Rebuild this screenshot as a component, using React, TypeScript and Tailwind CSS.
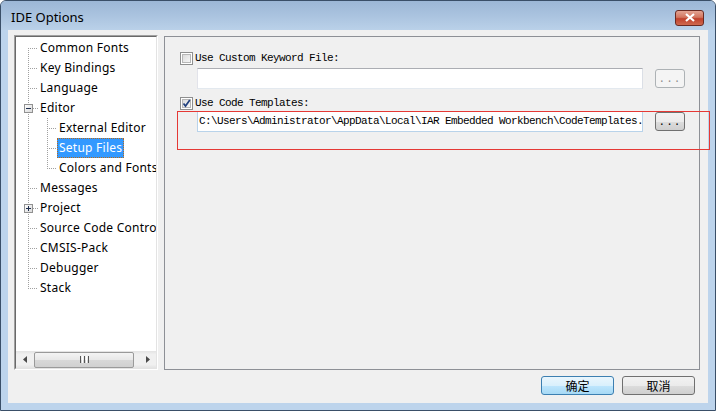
import React from 'react';

type Row = {
    label: string
    level: 0 | 1
    first?: boolean
    last?: boolean
    lastChild?: boolean
    expander?: 'plus' | 'minus'
    selected?: boolean
}

const rows: Row[] = [
    { label: 'Common Fonts', level: 0, first: true },
    { label: 'Key Bindings', level: 0 },
    { label: 'Language', level: 0 },
    { label: 'Editor', level: 0, expander: 'minus' },
    { label: 'External Editor', level: 1 },
    { label: 'Setup Files', level: 1, selected: true },
    { label: 'Colors and Fonts', level: 1, lastChild: true },
    { label: 'Messages', level: 0 },
    { label: 'Project', level: 0, expander: 'plus' },
    { label: 'Source Code Control', level: 0 },
    { label: 'CMSIS-Pack', level: 0 },
    { label: 'Debugger', level: 0 },
    { label: 'Stack', level: 0, last: true },
]

const dot = { stroke: '#a0a0a0', strokeWidth: 1, strokeDasharray: '1 1' }

function Connector({ row }: { row: Row }) {
    const w = row.level === 0 ? 22 : 41
    return (
        <svg width={w} height={20} className="shrink-0" shapeRendering="crispEdges">
            {/* root trunk */}
            <line x1={12.5} y1={row.first ? 10 : 0} x2={12.5} y2={row.last ? 11 : 20} {...dot} />
            {row.level === 0 && <line x1={row.expander ? 17 : 14} y1={10.5} x2={22} y2={10.5} {...dot} />}
            {row.level === 1 && (
                <>
                    <line x1={31.5} y1={0} x2={31.5} y2={row.lastChild ? 11 : 20} {...dot} />
                    <line x1={33} y1={10.5} x2={41} y2={10.5} {...dot} />
                </>
            )}
            {row.expander && (
                <g>
                    <defs>
                        <linearGradient id={`exp-${row.label}`} x1="0" y1="0" x2="1" y2="1">
                            <stop offset="0" stopColor="#ffffff" />
                            <stop offset="1" stopColor="#d8d8d8" />
                        </linearGradient>
                    </defs>
                    <rect x={8.5} y={6.5} width={8} height={8} fill={`url(#exp-${row.label})`} stroke="#919191" />
                    <line x1={10} y1={10.5} x2={15} y2={10.5} stroke="#1f2f4f" />
                    {row.expander === 'plus' && <line x1={12.5} y1={8} x2={12.5} y2={13} stroke="#1f2f4f" />}
                </g>
            )}
        </svg>
    )
}

function Checkbox({ checked }: { checked?: boolean }) {
    return (
        <div className="w-[13px] h-[13px] shrink-0 border border-[#8e8f8f] bg-white p-[1px]">
            <div className="w-full h-full relative border border-[#b7b7b7] bg-[linear-gradient(135deg,#dcdcdc_0%,#f6f6f6_100%)]">
                {checked && (
                    <svg width={11} height={11} viewBox="0 0 11 11" className="absolute -left-[2px] -top-[2px]">
                        <path d="M2.5 5.5 L4.5 8 L8.8 2" fill="none" stroke="#21407e" strokeWidth={1.7} />
                    </svg>
                )}
            </div>
        </div>
    )
}

function DotButton({ disabled }: { disabled?: boolean }) {
    return (
        <div
            className={
                disabled
                    ? 'w-[30px] h-[19px] ml-[12px] shrink-0 rounded-[3px] border border-[#adb2b5] bg-[#f4f4f4] flex items-center justify-center text-[#8d8d8d] text-[11px] font-[\'Liberation_Mono\',monospace] tracking-[1px] leading-none'
                    : 'w-[30px] h-[19px] ml-[12px] shrink-0 rounded-[3px] border border-[#707070] bg-[linear-gradient(to_bottom,#f2f2f2_0%,#ebebeb_50%,#dddddd_50%,#cfcfcf_100%)] flex items-center justify-center text-black text-[11px] font-[\'Liberation_Mono\',monospace] tracking-[1px] leading-none'
            }
        >
            <span className="mt-[2px]">...</span>
        </div>
    )
}

function Arrow({ dir }: { dir: 'left' | 'right' }) {
    return (
        <div className="w-[17px] h-[17px] flex items-center justify-center">
            <svg width={4} height={7} viewBox="0 0 4 7">
                <path d={dir === 'left' ? 'M4 0 L0 3.5 L4 7 Z' : 'M0 0 L4 3.5 L0 7 Z'} fill="#4a4a4a" />
            </svg>
        </div>
    )
}

export default function App() {
    return (
        <div className="relative w-[716px] h-[411px] flex flex-col border border-[#3a4f68] rounded-t-[6px] bg-[#bdd4ec] overflow-hidden font-['Noto_Sans','Liberation_Sans',sans-serif]">
            {/* title bar */}
            <div className="h-[29px] shrink-0 flex items-center pl-[10px] pr-[11px] bg-[linear-gradient(to_bottom,#9cb7d6_0%,#aac3df_50%,#bad1e9_100%)]">
                <span className="text-[13px] text-black pt-[5px]">IDE Options</span>
                <div className="ml-auto mt-[4px] w-[29px] h-[16px] rounded-[3px] border border-[#6a2a22] bg-[linear-gradient(to_bottom,#e3a493_0%,#d2755f_45%,#c0412c_55%,#cf6a4f_100%)] flex items-center justify-center">
                    <svg width={10} height={9} viewBox="0 0 10 9">
                        <path d="M1 1 L9 8 M9 1 L1 8" stroke="#ffffff" strokeWidth={2.2} />
                    </svg>
                </div>
            </div>

            {/* client area */}
            <div className="flex-1 mx-[7px] mb-[7px] bg-[#f0f0f0] flex flex-col">
                <div className="flex items-start pt-[5px] pl-[6px] gap-[6px]">
                    {/* tree */}
                    <div className="w-[144px] h-[335px] shrink-0 border border-t-[#a0a0a0] border-l-[#a0a0a0] border-b-white border-r-white">
                        <div className="w-full h-full flex flex-col bg-white border border-t-[#696969] border-l-[#696969] border-b-[#e3e3e3] border-r-[#e3e3e3]">
                            <div className="flex-1 overflow-hidden pt-[1px]">
                                {rows.map((row) => (
                                    <div key={row.label} className="flex h-[20px] items-start whitespace-nowrap">
                                        <Connector row={row} />
                                        <span
                                            className={
                                                row.selected
                                                    ? 'h-[20px] px-[1px] border border-dotted border-[#b86a1c] bg-[#3399ff] text-white text-[12px] tracking-[0.25px] leading-[18px]'
                                                    : 'h-[20px] px-[1px] border border-transparent text-black text-[12px] tracking-[0.25px] leading-[18px]'
                                            }
                                        >
                                            {row.label}
                                        </span>
                                    </div>
                                ))}
                            </div>
                            {/* horizontal scrollbar */}
                            <div className="h-[17px] shrink-0 flex items-center bg-[linear-gradient(to_bottom,#e3e3e3_0%,#f0f0f0_20%,#f0f0f0_80%,#e3e3e3_100%)]">
                                <Arrow dir="left" />
                                <div className="flex-1 h-[17px] flex items-center">
                                    <div className="w-[100px] h-[16px] ml-[1px] rounded-[2px] border border-[#9a9a9a] bg-[linear-gradient(to_bottom,#f4f4f4_0%,#e8e8e8_50%,#d8d8d8_51%,#d0d0d0_100%)] flex items-center justify-center gap-[1px]">
                                        <div className="w-[1px] h-[7px] bg-[#555]" />
                                        <div className="w-[1px] h-[7px] bg-[#fff]" />
                                        <div className="w-[1px] h-[7px] bg-[#555]" />
                                        <div className="w-[1px] h-[7px] bg-[#fff]" />
                                        <div className="w-[1px] h-[7px] bg-[#555]" />
                                    </div>
                                </div>
                                <Arrow dir="right" />
                            </div>
                        </div>
                    </div>

                    {/* settings page */}
                    <div className="w-[536px] h-[334px] mt-[1px] border border-[#8d9096] pt-[15px] pl-[15px] flex flex-col font-['Liberation_Mono',monospace] text-[11px] tracking-[-0.6px] text-black">
                        <div className="flex items-center h-[13px]">
                            <Checkbox />
                            <span className="ml-[2px] leading-none">Use Custom Keyword File:</span>
                        </div>
                        <div className="flex items-center mt-[3px] ml-[17px]">
                            <div className="w-[446px] h-[21px] bg-white border border-[#abadb3] border-l-[#e2e3ea] border-r-[#dbdfe6] border-b-[#e3e9ef]" />
                            <DotButton disabled />
                        </div>
                        <div className="flex items-center h-[13px] mt-[8px]">
                            <Checkbox checked />
                            <span className="ml-[2px] leading-none">Use Code Templates:</span>
                        </div>
                        <div className="flex items-center mt-[1px] ml-[17px]">
                            <div className="w-[446px] h-[21px] bg-white border border-[#b9d3ea] flex items-center pl-[1px] overflow-hidden whitespace-nowrap">
                                <span className="leading-none">C:\Users\Administrator\AppData\Local\IAR Embedded Workbench\CodeTemplates.</span>
                            </div>
                            <DotButton />
                        </div>
                    </div>
                </div>

                {/* dialog buttons */}
                <div className="flex justify-end gap-[8px] pr-[13px] mt-[6px] font-['Noto_Sans_CJK_SC','Noto_Sans',sans-serif] text-[12px] text-black">
                    <div className="w-[73px] h-[19px] rounded-[3px] border border-[#3c7fb1] bg-[linear-gradient(to_bottom,#eaf6fd_0%,#d9f0fc_50%,#bee6fd_50%,#a7d9f5_100%)] flex items-center justify-center leading-none">
                        确定
                    </div>
                    <div className="w-[73px] h-[19px] rounded-[3px] border border-[#707070] bg-[linear-gradient(to_bottom,#f2f2f2_0%,#ebebeb_50%,#dddddd_50%,#cfcfcf_100%)] flex items-center justify-center leading-none">
                        取消
                    </div>
                </div>
            </div>

            {/* red annotation box drawn over the screenshot */}
            <div className="absolute left-[176px] top-[110px] w-[533px] h-[39px] border border-[#e53935] pointer-events-none" />
        </div>
    )
}
